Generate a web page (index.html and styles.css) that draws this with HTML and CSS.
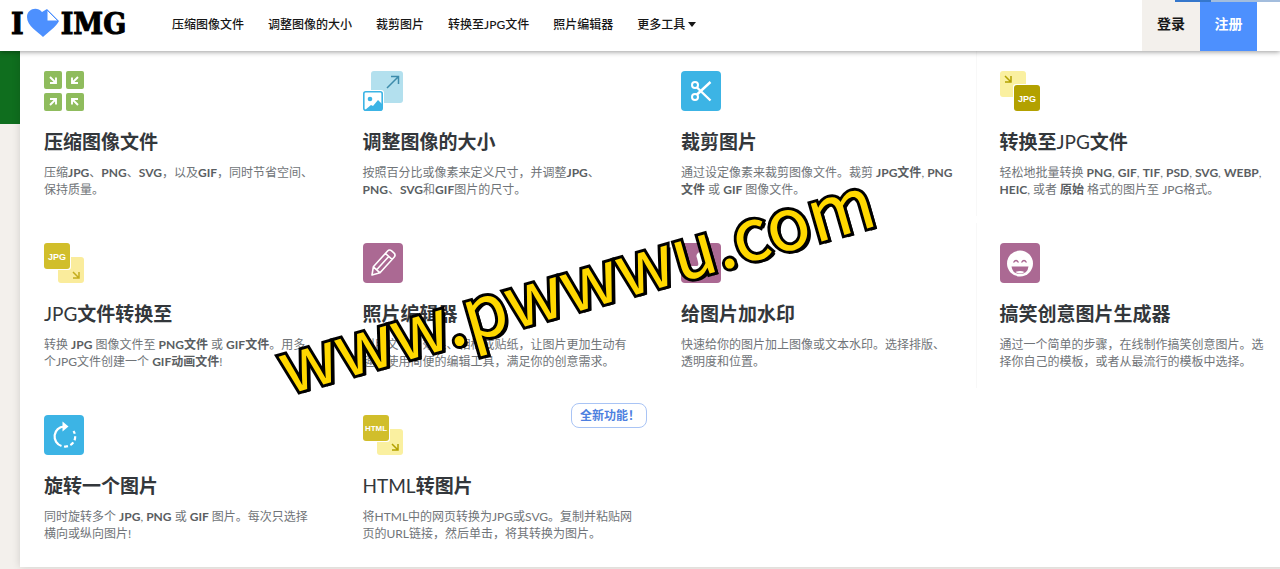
FILE: index.html
```
<!DOCTYPE html>
<html lang="zh-CN">
<head>
    <meta charset="UTF-8">
    <meta name="viewport" content="width=device-width, initial-scale=1.0">
    <title>I Love IMG</title>
    <link rel="stylesheet" href="styles.css">
</head>
<body>
    <header class="header">
        <a class="logo" href="#" aria-label="iLoveIMG">
            <span>I</span>
            <svg width="34" height="30" viewBox="0 0 34 30">
                <path fill="#4d90fe" d="M17 29 C12 24 1 18 1 9 C1 1 11 -2 16 4 L21 1 L33 13 C30 19 21 25 17 29Z"/>
                <path fill="#fff" stroke="#4d90fe" d="M21 2 L21 13 L32 13Z"/>
            </svg>
            <span>IMG</span>
        </a>
        <nav class="nav">
            <a href="#">压缩图像文件</a>
            <a href="#">调整图像的大小</a>
            <a href="#">裁剪图片</a>
            <a href="#">转换至JPG文件</a>
            <a href="#">照片编辑器</a>
            <a href="#" class="more">更多工具</a>
        </nav>
        <div class="account">
            <a class="login" href="#">登录</a>
            <a class="signup" href="#">注册</a>
        </div>
        <div class="strip"></div>
    </header>

    <main class="page">
        <div class="hero"></div>
        <div class="tools">
            <a class="tool" href="#">
                <svg class="icon" viewBox="0 0 40 40">
                    <g fill="#8fbc5d">
                        <rect width="18" height="18" rx="2"/>
                        <rect x="22" width="18" height="18" rx="2"/>
                        <rect y="22" width="18" height="18" rx="2"/>
                        <rect x="22" y="22" width="18" height="18" rx="2"/>
                    </g>
                    <g fill="none" stroke="#fff" stroke-width="1.9">
                        <path d="M6 6l6 6M12 6.500v5.500h-6"/>
                        <path d="M34 6l-6 6M28 6.500v5.500h6"/>
                        <path d="M6 34l6-6M12 33.500V28h-6"/>
                        <path d="M34 34l-6-6M28 33.500V28h6"/>
                    </g>
                </svg>
                <h3>压缩图像文件</h3>
                <p>压缩<b>JPG</b>、<b>PNG</b>、<b>SVG</b>，以及<b>GIF</b>，同时节省空间、<br>保持质量。</p>
            </a>
            <a class="tool" href="#">
                <svg class="icon" viewBox="0 0 40 40">
                    <rect x="8" width="32" height="32" rx="3" fill="#b3e0ee"/>
                    <path d="M24 17L35 6M28 5.500h7.500V13" fill="none" stroke="#3d8bab" stroke-width="1.500"/>
                    <rect x="-1" y="19" width="22" height="22" rx="3" fill="#fff"/>
                    <rect x="0.800" y="20.800" width="18.400" height="18.400" rx="2" fill="#fff" stroke="#3cb4e5" stroke-width="1.600"/>
                    <circle cx="7" cy="28" r="2.300" fill="#3cb4e5"/>
                    <path d="M2 39l6-5 2 1 5-6 4 4v6H2z" fill="#3cb4e5"/>
                </svg>
                <h3>调整图像的大小</h3>
                <p>按照百分比或像素来定义尺寸，并调整<b>JPG</b>、<br><b>PNG</b>、<b>SVG</b>和<b>GIF</b>图片的尺寸。</p>
            </a>
            <a class="tool" href="#">
                <svg class="icon" viewBox="0 0 40 40">
                    <rect width="40" height="40" rx="4" fill="#3cb4e5"/>
                    <g fill="none" stroke="#fff" stroke-width="2">
                        <circle cx="14" cy="14" r="3"/>
                        <circle cx="14" cy="26" r="3"/>
                        <path stroke-width="2.400" d="M16 16.500L29.500 29.500M16 23.500L29.500 11"/>
                    </g>
                </svg>
                <h3>裁剪图片</h3>
                <p>通过设定像素来裁剪图像文件。裁剪 <b>JPG文件</b>, <b>PNG</b><br><b>文件</b> 或 <b>GIF</b> 图像文件。</p>
            </a>
            <a class="tool lined" href="#">
                <svg class="icon" viewBox="0 0 40 40">
                    <rect width="26" height="26" rx="3" fill="#faf0a0"/>
                    <path d="M5 5l6 6M11 5v6H5" fill="none" stroke="#b3a100" stroke-width="1.500"/>
                    <rect x="13" y="13" width="28" height="28" rx="3" fill="#fff"/>
                    <rect x="14" y="14" width="26" height="26" rx="3" fill="#b3a100"/>
                    <text x="27" y="30.500" class="tag">JPG</text>
                </svg>
                <h3>转换至<span>JPG</span>文件</h3>
                <p>轻松地批量转换 <b>PNG</b>, <b>GIF</b>, <b>TIF</b>, <b>PSD</b>, <b>SVG</b>, <b>WEBP</b>,<br><b>HEIC</b>, 或者 <b>原始</b> 格式的图片至 JPG格式。</p>
            </a>
            <a class="tool" href="#">
                <svg class="icon" viewBox="0 0 40 40">
                    <rect x="14" y="14" width="26" height="26" rx="3" fill="#faec9c"/>
                    <path d="M29 29l6 6M35 29v6h-6" fill="none" stroke="#c4ad1c" stroke-width="1.500"/>
                    <rect x="-1" y="-1" width="28" height="28" rx="3" fill="#fff"/>
                    <rect width="26" height="26" rx="3" fill="#d1be2b"/>
                    <text x="13" y="16.500" class="tag">JPG</text>
                </svg>
                <h3><span>JPG</span>文件转换至</h3>
                <p>转换 <b>JPG</b> 图像文件至 <b>PNG文件</b> 或 <b>GIF文件</b>。用多<br>个JPG文件创建一个 <b>GIF动画文件</b>!</p>
            </a>
            <a class="tool" href="#">
                <svg class="icon" viewBox="0 0 40 40">
                    <rect width="40" height="40" rx="4" fill="#ab6993"/>
                    <g transform="translate(9 32) rotate(-48)" fill="none" stroke="#fff" stroke-width="1.600" stroke-linejoin="round">
                        <path d="M0 0l7-4.500h21q3 0 3 3v3q0 3-3 3H7zM7-4.500v9M25-4.500v9M7 0h18"/>
                    </g>
                </svg>
                <h3>照片编辑器</h3>
                <p>利用文字、效果、相框或贴纸，让图片更加生动有<br>趣。使用简便的编辑工具，满足你的创意需求。</p>
            </a>
            <a class="tool" href="#">
                <svg class="icon" viewBox="0 0 40 40">
                    <rect width="40" height="40" rx="4" fill="#ab6993"/>
                    <path fill="#fff" d="M10 23h6q2 0 1-4l-1-4a4 4 0 1 1 7 0l-1 4q-1 4 2 4h5v5H10z"/>
                </svg>
                <h3>给图片加水印</h3>
                <p>快速给你的图片加上图像或文本水印。选择排版、<br>透明度和位置。</p>
            </a>
            <a class="tool lined" href="#">
                <svg class="icon" viewBox="0 0 40 40">
                    <rect width="40" height="40" rx="4" fill="#ab6993"/>
                    <circle cx="20" cy="20.500" r="13" fill="#fff"/>
                    <path d="M13.500 19.500q2.500-4 5 0M21.500 19.500q2.500-4 5 0" fill="none" stroke="#ab6993" stroke-width="1.300"/>
                    <path d="M11.500 23.500h17q-1 7.500-8.500 7.500t-8.500-7.500z" fill="#ab6993"/>
                    <path d="M15.500 29q4.500-2 9 0-4.500 3-9 0z" fill="#fff"/>
                </svg>
                <h3>搞笑创意图片生成器</h3>
                <p>通过一个简单的步骤，在线制作搞笑创意图片。选<br>择你自己的模板，或者从最流行的模板中选择。</p>
            </a>
            <a class="tool" href="#">
                <svg class="icon" viewBox="0 0 40 40">
                    <rect width="40" height="40" rx="4" fill="#3cb4e5"/>
                    <path d="M17.500 31A10 10 0 0 1 20 11.500" fill="none" stroke="#fff" stroke-width="2.200"/>
                    <path d="M20 31.500A10 10 0 0 0 29.500 16" fill="none" stroke="#fff" stroke-width="2.200" stroke-dasharray="4 2.500"/>
                    <path d="M18.500 6.500l6 5-6 5z" fill="#fff"/>
                </svg>
                <h3>旋转一个图片</h3>
                <p>同时旋转多个 <b>JPG</b>, <b>PNG</b> 或 <b>GIF</b> 图片。每次只选择<br>横向或纵向图片!</p>
            </a>
            <a class="tool" href="#">
                <span class="badge">全新功能！</span>
                <svg class="icon" viewBox="0 0 40 40">
                    <rect x="14" y="14" width="26" height="26" rx="3" fill="#faf0a0"/>
                    <path d="M29 29l6 6M35 29v6h-6" fill="none" stroke="#b3a100" stroke-width="1.500"/>
                    <rect x="-1" y="-1" width="28" height="28" rx="3" fill="#fff"/>
                    <rect width="26" height="26" rx="3" fill="#d1be2b"/>
                    <text x="13" y="16" class="tag small">HTML</text>
                </svg>
                <h3><span>HTML</span>转图片</h3>
                <p>将HTML中的网页转换为JPG或SVG。复制并粘贴网<br>页的URL链接，然后单击，将其转换为图片。</p>
            </a>
        </div>
    </main>
    <div class="watermark">www.pwwwu.com</div>
</body>
</html>
```
FILE: styles.css
```
* {
    box-sizing: border-box;
}

body {
    margin: 0;
    background: #f3f0ec;
    font-family: Lato, "Noto Sans CJK SC", sans-serif;
    overflow-x: hidden;
}

a {
    color: inherit;
    text-decoration: none;
}

/* Header */
.header {
    position: relative;
    z-index: 2;
    display: flex;
    height: 51px;
    padding: 0 23px 0 11px;
    background: #fff;
    box-shadow: 0 1px 5px rgba(0, 0, 0, 0.4);
}

.logo {
    display: flex;
    align-items: center;
    width: 161px;
    height: 46px;
    color: #000;
    font: bold 30px "DejaVu Serif Condensed", "DejaVu Serif", serif;
    -webkit-text-stroke: 1px #000;
}

.logo svg {
    margin: 0 1px 0 2px;
}

.nav {
    display: flex;
    align-items: center;
    gap: 24px;
    flex: 1;
    height: 47px;
    color: #161616;
    font-size: 12px;
    font-weight: 500;
    white-space: nowrap;
}

.more::after {
    content: "";
    display: inline-block;
    margin-left: 3px;
    border: 4px solid transparent;
    border-top: 5px solid #161616;
    border-bottom: 0;
    vertical-align: 2px;
}

.account {
    display: flex;
    font-size: 14px;
    font-weight: bold;
    line-height: 47px;
    text-align: center;
}

.login {
    width: 58px;
    background: #f3f0ec;
    color: #161616;
}

.signup {
    width: 57px;
    background: #4d90fe;
    color: #fff;
}

.strip {
    position: absolute;
    top: 0;
    right: 0;
    width: 105px;
    height: 2px;
    background: linear-gradient(to right, #3577cc 34%, #a3bddd 34%);
}

/* Tools menu */
.page {
    position: relative;
    padding: 0 0 2px 20px;
    overflow: hidden;
}

.hero {
    position: absolute;
    top: 0;
    left: 0;
    width: 100%;
    height: 73px;
    background: #0f6e1e;
}

.tools {
    position: relative;
    display: grid;
    grid-template-columns: repeat(4, 1fr);
    margin-right: -14px;
    background: #fff;
    box-shadow: 0 0 8px rgba(0, 0, 0, 0.15);
}

.tool {
    position: relative;
    padding: 20px 0 25px 24px;
    white-space: nowrap;
}

.lined {
    background: linear-gradient(#f8f8f8, #f8f8f8) 0 0 / 1px 96% no-repeat;
}

.icon {
    display: block;
    width: 40px;
    height: 40px;
    overflow: visible;
}

.tool h3 {
    margin: 19px 0 10px;
    color: #33373b;
    font-size: 19px;
    line-height: 24px;
}

.tool h3 span {
    font-weight: 400;
}

.tool p {
    margin: 0;
    color: #707478;
    font-size: 12px;
    line-height: 17px;
}

.tool b {
    color: #5a5e62;
}

.tag {
    fill: #fff;
    font: bold 9px "Liberation Sans", sans-serif;
    text-anchor: middle;
}

.small {
    font-size: 8px;
}

.badge {
    position: absolute;
    top: 8px;
    right: 10px;
    width: 76px;
    padding-left: 8px;
    border: 1px solid #a9c4f5;
    border-radius: 8px;
    color: #4d7fe0;
    font-size: 12px;
    font-weight: bold;
    line-height: 23px;
}

.watermark {
    position: absolute;
    z-index: 3;
    top: 230px;
    left: 267px;
    color: #ffd800;
    font: 400 72px/100px "Noto Sans CJK SC", sans-serif;
    white-space: nowrap;
    transform: rotate(-16deg);
    -webkit-text-stroke: 6px #000;
    paint-order: stroke fill;
    text-shadow: 3px 3px 0 #000;
}
```
